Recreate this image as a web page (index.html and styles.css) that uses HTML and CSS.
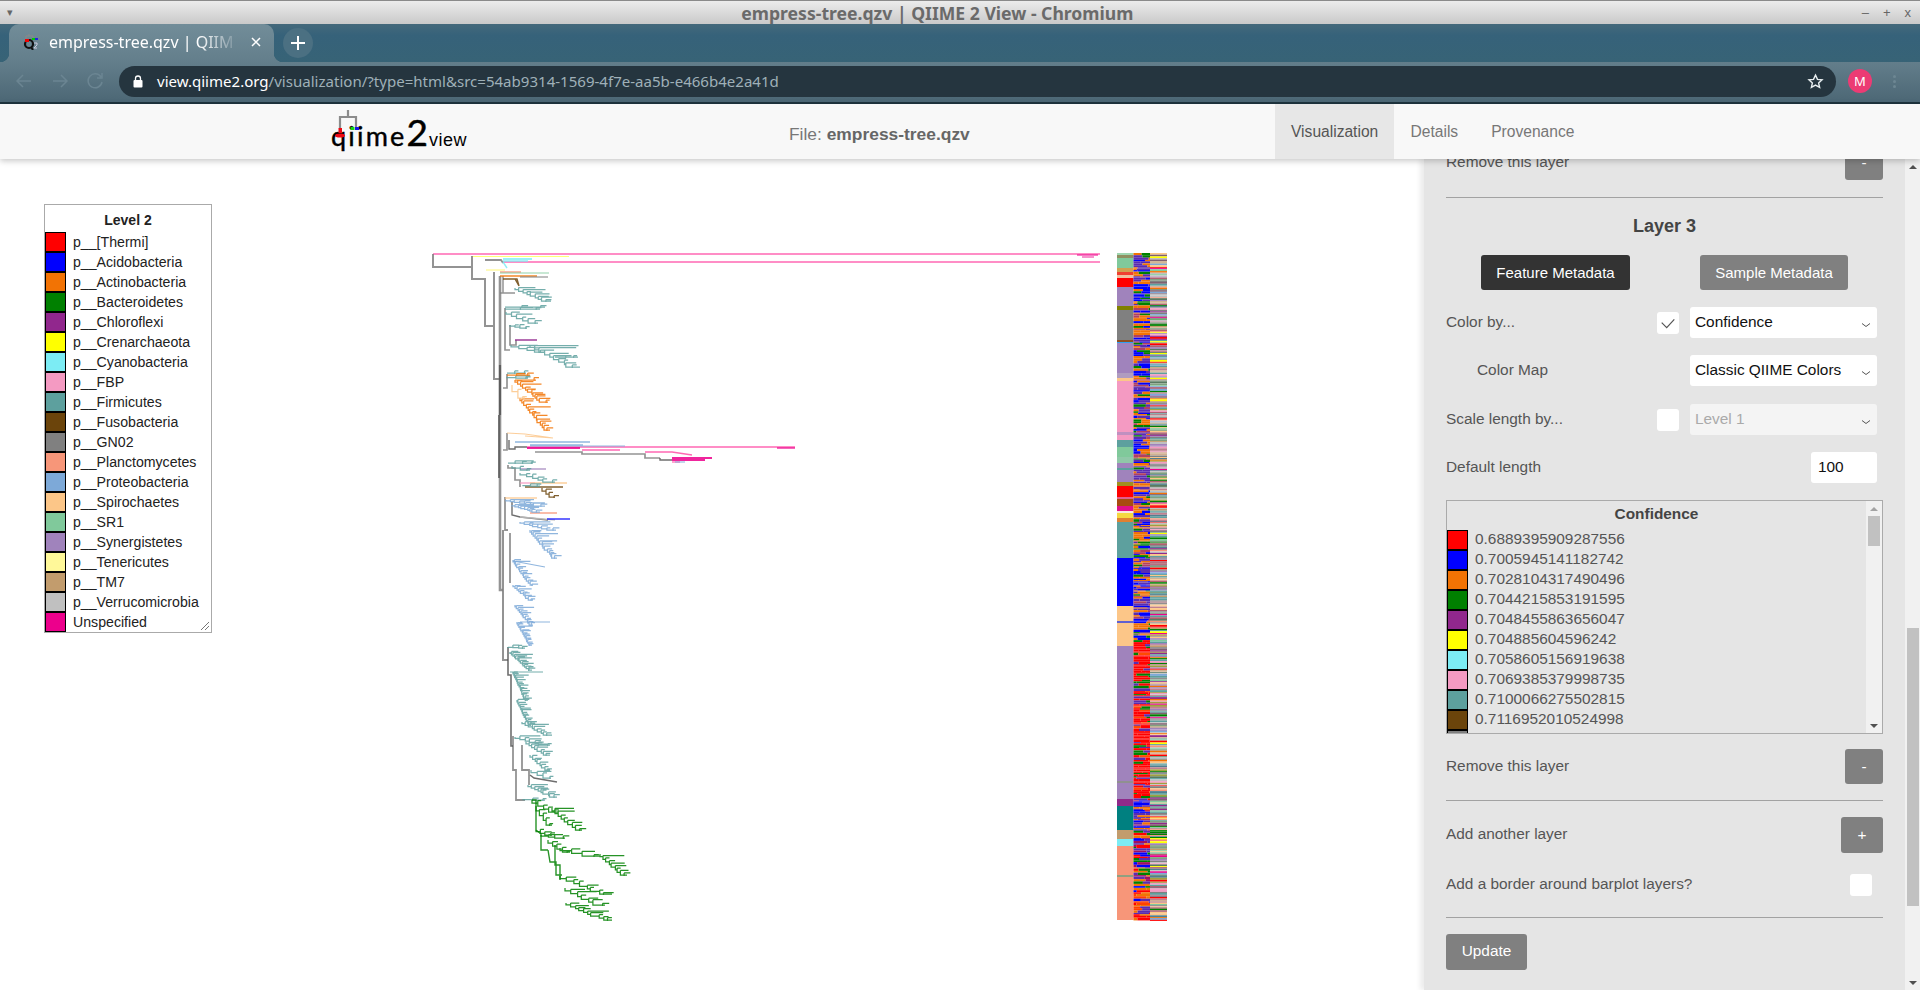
FILE: index.html
```html
<!DOCTYPE html>
<html lang="en">
<head>
    <meta charset="UTF-8">
    <title>empress-tree.qzv | QIIME 2 View - Chromium</title>
    <link rel="stylesheet" href="styles.css">
</head>
<body>
    <div class="titlebar">
        <span class="win-menu">▾</span>
        <span class="win-title">empress-tree.qzv | QIIME 2 View - Chromium</span>
        <span class="win-btns"><span>–</span><span>+</span><span>x</span></span>
    </div>
    <div class="tabstrip">
        <div class="tab">
            <svg class="favicon" width="16" height="16" viewBox="0 0 16 16">
                <circle cx="6" cy="10" r="4" fill="none" stroke="#111" stroke-width="2.200"/>
                <path d="M8 13l2 3" stroke="#111" stroke-width="2"/>
                <path d="M6 0v2M3 6V2h7v4" fill="none" stroke="#8a8a8a" stroke-width="1"/>
                <rect x="2" y="5" width="4" height="3" fill="#e00"/>
                <rect x="9" y="4" width="3" height="2" fill="#0c0"/>
                <rect x="12" y="4" width="3" height="2" fill="#22d"/>
                <path d="M11 9h3v2l-3 3h3" fill="none" stroke="#ccd" stroke-width="1"/>
            </svg>
            <span class="tab-title">empress-tree.qzv | QIIM</span>
            <svg class="tab-close" width="10" height="10" viewBox="0 0 10 10" stroke="#fff" stroke-width="1.500"><path d="M1 1l8 8M9 1l-8 8"/></svg>
        </div>
        <div class="newtab">
            <svg width="14" height="14" viewBox="0 0 14 14" stroke="#fff" stroke-width="2"><path d="M7 0v14M0 7h14"/></svg>
        </div>
    </div>
    <div class="toolbar">
        <svg class="nav-icons" width="90" height="20" viewBox="0 0 90 20" fill="none" stroke="#6b8592" stroke-width="1.500">
            <path d="M16 10H3M8 4l-6 6 6 6"/>
            <path d="M38 10h13M46 4l6 6-6 6"/>
            <path d="M86 6a7 7 0 1 0 1 5M87 2v5h-5"/>
        </svg>
        <div class="omnibox">
            <svg class="lock" width="10" height="13" viewBox="0 0 10 13">
                <rect x="0.500" y="5" width="9" height="7.500" rx="1" fill="#fff"/>
                <path d="M2.500 5V3.500a2.500 2.500 0 0 1 5 0V5" fill="none" stroke="#fff" stroke-width="1.300"/>
            </svg>
            <span class="url"><b>view.qiime2.org</b>/visualization/?type=html&amp;src=54ab9314-1569-4f7e-aa5b-e466b4e2a41d</span>
            <svg class="star" width="17" height="17" viewBox="0 0 24 24" fill="none" stroke="#e8eef0" stroke-width="2">
                <path d="M12 3l2.800 6 6.400.7-4.800 4.300 1.400 6.400-5.800-3.300-5.800 3.300 1.400-6.400-4.800-4.300 6.400-.7z"/>
            </svg>
        </div>
        <div class="avatar">M</div>
        <div class="dots"><i></i><i></i><i></i></div>
    </div>

    <nav class="navbar">
        <div class="logo">
            <span class="logo-qiime">qiime</span><span class="logo-two">2</span><span class="logo-view">view</span>
            <svg class="logo-tree" width="28" height="30" viewBox="0 0 28 30">
                <path d="M15 0v7M7 19V7h16v10" fill="none" stroke="#8c8c8c" stroke-width="2.200"/>
                <rect x="5.500" y="18" width="3.500" height="5" fill="#ee0a14"/>
                <ellipse cx="7" cy="25.500" rx="5" ry="2" fill="#ee0a14"/>
                <rect x="17.500" y="17" width="4" height="3" fill="#14d214"/>
                <rect x="22" y="17" width="4" height="3" fill="#1414e6"/>
            </svg>
        </div>
        <div class="file-name">File: <strong>empress-tree.qzv</strong></div>
        <ul class="nav-tabs">
            <li class="active">Visualization</li>
            <li>Details</li>
            <li>Provenance</li>
        </ul>
    </nav>

    <main class="main">
        <div class="canvas">
            <svg id="plot" class="plot" width="1424" height="831" viewBox="0 159 1424 831"></svg>
            <div class="legend legend-float">
                <div class="legend-title">Level 2</div>
                <div class="legend-row"><span class="swatch" style="background:#ff0000"></span>p__[Thermi]</div>
                <div class="legend-row"><span class="swatch" style="background:#0000ff"></span>p__Acidobacteria</div>
                <div class="legend-row"><span class="swatch" style="background:#f27304"></span>p__Actinobacteria</div>
                <div class="legend-row"><span class="swatch" style="background:#008000"></span>p__Bacteroidetes</div>
                <div class="legend-row"><span class="swatch" style="background:#91278d"></span>p__Chloroflexi</div>
                <div class="legend-row"><span class="swatch" style="background:#ffff00"></span>p__Crenarchaeota</div>
                <div class="legend-row"><span class="swatch" style="background:#7cecf4"></span>p__Cyanobacteria</div>
                <div class="legend-row"><span class="swatch" style="background:#f49ac2"></span>p__FBP</div>
                <div class="legend-row"><span class="swatch" style="background:#5da09e"></span>p__Firmicutes</div>
                <div class="legend-row"><span class="swatch" style="background:#6b440b"></span>p__Fusobacteria</div>
                <div class="legend-row"><span class="swatch" style="background:#808080"></span>p__GN02</div>
                <div class="legend-row"><span class="swatch" style="background:#f79679"></span>p__Planctomycetes</div>
                <div class="legend-row"><span class="swatch" style="background:#7da9d8"></span>p__Proteobacteria</div>
                <div class="legend-row"><span class="swatch" style="background:#fcc688"></span>p__Spirochaetes</div>
                <div class="legend-row"><span class="swatch" style="background:#80c99b"></span>p__SR1</div>
                <div class="legend-row"><span class="swatch" style="background:#a083bc"></span>p__Synergistetes</div>
                <div class="legend-row"><span class="swatch" style="background:#fff899"></span>p__Tenericutes</div>
                <div class="legend-row"><span class="swatch" style="background:#c29c6d"></span>p__TM7</div>
                <div class="legend-row"><span class="swatch" style="background:#c0c0c0"></span>p__Verrucomicrobia</div>
                <div class="legend-row"><span class="swatch" style="background:#ec008c"></span>Unspecified</div>
                <svg class="grip" width="10" height="10" viewBox="0 0 10 10" stroke="#777"><path d="M1 9l8-8M5 9l4-4"/></svg>
            </div>
        </div>

        <aside class="sidebar">
            <div class="side-body">
                <div class="row row-first">
                    <span class="label">Remove this layer</span>
                    <button class="btn btn-small">-</button>
                </div>
                <hr class="rule">
                <h3 class="layer-title">Layer 3</h3>
                <div class="tab-btns">
                    <button class="btn btn-dark btn-meta">Feature Metadata</button>
                    <button class="btn btn-meta">Sample Metadata</button>
                </div>
                <div class="row row-form">
                    <span class="label">Color by...</span>
                    <span class="check">
                        <svg width="22" height="22" viewBox="0 0 22 22" fill="none" stroke="#555" stroke-width="1.200"><path d="M4.700 10.700l5 5 7.600-8.400"/></svg>
                    </span>
                    <div class="select">Confidence<svg class="chev" width="10" height="6" viewBox="0 0 10 6" fill="none" stroke="#555"><path d="M1 1.500l4 3 4-3"/></svg></div>
                </div>
                <div class="row row-form">
                    <span class="label label-indent">Color Map</span>
                    <div class="select">Classic QIIME Colors<svg class="chev" width="10" height="6" viewBox="0 0 10 6" fill="none" stroke="#555"><path d="M1 1.500l4 3 4-3"/></svg></div>
                </div>
                <div class="row row-form row-scale">
                    <span class="label">Scale length by...</span>
                    <span class="check"></span>
                    <div class="select select-off">Level 1<svg class="chev" width="10" height="6" viewBox="0 0 10 6" fill="none" stroke="#555"><path d="M1 1.500l4 3 4-3"/></svg></div>
                </div>
                <div class="row row-form">
                    <span class="label">Default length</span>
                    <div class="num-input">100</div>
                </div>
                <div class="legend legend-inner">
                    <div class="legend-list">
                        <div class="legend-title">Confidence</div>
                        <div class="legend-row"><span class="swatch" style="background:#ff0000"></span>0.6889395909287556</div>
                        <div class="legend-row"><span class="swatch" style="background:#0000ff"></span>0.7005945141182742</div>
                        <div class="legend-row"><span class="swatch" style="background:#f27304"></span>0.7028104317490496</div>
                        <div class="legend-row"><span class="swatch" style="background:#008000"></span>0.7044215853191595</div>
                        <div class="legend-row"><span class="swatch" style="background:#91278d"></span>0.7048455863656047</div>
                        <div class="legend-row"><span class="swatch" style="background:#ffff00"></span>0.704885604596242</div>
                        <div class="legend-row"><span class="swatch" style="background:#7cecf4"></span>0.7058605156919638</div>
                        <div class="legend-row"><span class="swatch" style="background:#f49ac2"></span>0.7069385379998735</div>
                        <div class="legend-row"><span class="swatch" style="background:#5da09e"></span>0.7100066275502815</div>
                        <div class="legend-row"><span class="swatch" style="background:#6b440b"></span>0.7116952010524998</div>
                        <div class="legend-row"><span class="swatch" style="background:#808080"></span></div>
                    </div>
                    <div class="inner-scroll">
                        <span class="arrow-up arrow-light"></span>
                        <span class="inner-thumb"></span>
                        <span class="arrow-down"></span>
                    </div>
                </div>
                <div class="row row-remove">
                    <span class="label">Remove this layer</span>
                    <button class="btn btn-small">-</button>
                </div>
                <hr class="rule rule-mid">
                <div class="row row-add">
                    <span class="label">Add another layer</span>
                    <button class="btn btn-plus">+</button>
                </div>
                <div class="row row-border">
                    <span class="label">Add a border around barplot layers?</span>
                    <span class="check"></span>
                </div>
                <hr class="rule rule-low">
                <button class="btn btn-update">Update</button>
            </div>
            <div class="side-scroll">
                <span class="arrow-up"></span>
                <span class="side-thumb"></span>
                <span class="arrow-down"></span>
            </div>
        </aside>
    </main>
    <script src="app.js"></script>
</body>
</html>
```

FILE: styles.css
```css
* {
    box-sizing: border-box;
}

html, body {
    margin: 0;
    padding: 0;
    height: 990px;
    overflow: hidden;
}

body {
    display: flex;
    flex-direction: column;
    font-family: "Liberation Sans", Arial, sans-serif;
    background: #fff;
}

/* window + browser chrome */
.titlebar {
    height: 24px;
    display: flex;
    align-items: center;
    justify-content: space-between;
    padding: 0 7px;
    border-top: 1px solid #8a8a8a;
    background: linear-gradient(#ececec, #c9c9c9);
    color: #666;
}

.win-menu {
    font-size: 11px;
}

.win-title {
    flex: 1;
    text-align: center;
    font: bold 17.600px "Noto Sans", sans-serif;
    color: #6a6a6a;
    padding-left: 6px;
    padding-right: 6px;
}

.win-btns {
    display: flex;
    gap: 14px;
    font-size: 13px;
    padding-right: 2px;
}

.tabstrip {
    height: 38px;
    display: flex;
    align-items: flex-end;
    background: linear-gradient(#44697b, #36627a 30%, #376376);
    padding-left: 9px;
}

.tab {
    width: 265px;
    height: 38px;
    padding: 0 0 3px 14px;
    display: flex;
    align-items: center;
    position: relative;
    border-radius: 10px 10px 0 0;
    background: linear-gradient(#728d99, #637e8b);
    color: #fff;
}

/* flared bottom corners of the tab */
.tab::before,
.tab::after {
    content: "";
    position: absolute;
    bottom: 0;
    width: 9px;
    height: 9px;
}

.tab::before {
    left: -9px;
    background: radial-gradient(circle at 0 0, transparent 9px, #637e8b 9.500px);
}

.tab::after {
    right: -9px;
    background: radial-gradient(circle at 100% 0, transparent 9px, #637e8b 9.500px);
}

.favicon {
    flex: none;
}

.tab-title {
    flex: none;
    width: 192px;
    margin-left: 10px;
    white-space: nowrap;
    font: 16px "Noto Sans", sans-serif;
    -webkit-mask-image: linear-gradient(90deg, #000 78%, transparent 100%);
    mask-image: linear-gradient(90deg, #000 78%, transparent 100%);
}

.tab-close {
    flex: none;
    margin-left: 10px;
}

.newtab {
    width: 30px;
    height: 30px;
    margin: 0 0 4px 9px;
    display: flex;
    align-items: center;
    justify-content: center;
    border-radius: 50%;
    background: #4b7082;
}

.toolbar {
    height: 42px;
    display: flex;
    align-items: center;
    padding: 0 0 2px 15px;
    background: linear-gradient(#637e8b, #4d6876 95%);
    border-bottom: 2px solid #1e343e;
}

.nav-icons {
    flex: none;
}

.omnibox {
    width: 1717px;
    height: 31px;
    margin-left: 14px;
    display: flex;
    align-items: center;
    padding: 0 12px 0 14px;
    border-radius: 16px;
    background: #25353f;
}

.lock {
    flex: none;
}

.url {
    flex: 1;
    margin-left: 14px;
    font: 15.050px "Noto Sans", sans-serif;
    color: #9fb0b8;
    white-space: nowrap;
}

.url b {
    font-weight: normal;
    color: #fff;
}

.avatar {
    width: 24px;
    height: 24px;
    margin-left: 12px;
    border-radius: 50%;
    background: #ec3b74;
    color: #fff;
    text-align: center;
    font: 13px/24px "Noto Sans", sans-serif;
}

.dots {
    margin-left: 21px;
    display: flex;
    flex-direction: column;
    gap: 2px;
}

.dots i {
    width: 3px;
    height: 3px;
    border-radius: 50%;
    background: #6d8793;
}

/* qiime2 view navbar */
.navbar {
    height: 55px;
    display: flex;
    position: relative;
    z-index: 5;
    background: #f8f8f8;
    box-shadow: 0 2px 6px rgba(0, 0, 0, 0.22);
}

.logo {
    width: 789px;
    padding: 9px 0 0 331px;
    display: flex;
    align-items: baseline;
    position: relative;
    color: #000;
    line-height: 1;
}

.logo-tree {
    position: absolute;
    left: 333px;
    top: 6px;
}

.logo-qiime {
    font: 27px/1 "Lato", sans-serif;
    letter-spacing: 2.200px;
    -webkit-text-stroke: 0.400px #000;
}

.logo-two {
    font: 37px/1 "Lato", sans-serif;
    -webkit-text-stroke: 0.500px #000;
}

.logo-view {
    font: 18px/1 "Liberation Sans", sans-serif;
    letter-spacing: 0.500px;
    margin-left: 1px;
}

.file-name {
    width: 486px;
    padding-top: 20px;
    font-size: 17.400px;
    color: #777;
}

.file-name strong {
    color: #666;
}

.nav-tabs {
    display: flex;
    margin: 0;
    padding: 0;
    list-style: none;
    font-size: 15.600px;
    color: #777;
}

.nav-tabs li {
    padding: 19px 16.500px 0;
}

.nav-tabs li.active {
    width: 119px;
    padding-left: 16px;
    padding-right: 0;
    background: #e7e7e7;
    color: #555;
}

/* main area */
.main {
    flex: 1;
    display: flex;
    min-height: 0;
}

.canvas {
    flex: 1;
    position: relative;
}

.plot {
    display: block;
}

.plot .soft {
    filter: blur(0.450px);
}

.legend-float {
    position: absolute;
    left: 44px;
    top: 45px;
    width: 168px;
    height: 429px;
    border: 1px solid #aaa;
    background: #fff;
    font-size: 14.150px;
    color: #222;
}

.legend-title {
    height: 27px;
    padding-top: 7px;
    text-align: center;
    font-weight: bold;
    font-size: 14px;
}

.legend-row {
    height: 20px;
    display: flex;
    align-items: center;
    white-space: nowrap;
}

.swatch {
    flex: none;
    align-self: flex-start;
    width: 21px;
    height: 20px;
    margin-right: 7px;
    border: 1px solid #000;
}

.grip {
    position: absolute;
    right: 1px;
    bottom: 1px;
}

/* right panel */
.sidebar {
    width: 496px;
    flex: none;
    display: flex;
    box-shadow: -4px 0 5px rgba(0, 0, 0, 0.08);
}

.side-body {
    flex: 1;
    padding: 0 22px;
    background: #e5e5e5;
    color: #555;
    font-size: 15.400px;
}

.row {
    display: flex;
    align-items: center;
    justify-content: space-between;
}

.row-first {
    margin-top: -14px;
}

.label {
    flex: 1;
    padding-bottom: 2px;
}

.label-indent {
    padding-left: 31px;
}

.rule {
    margin: 17px 0 0;
    border: 0;
    border-top: 1px solid #a2a2a2;
    height: 1px;
}

.rule-mid {
    margin-top: 16px;
}

.rule-low {
    margin-top: 21px;
}

.layer-title {
    margin: 18px 0 0;
    height: 20px;
    text-align: center;
    font-size: 18px;
    line-height: 21px;
    color: #444;
}

.btn {
    display: block;
    padding: 0;
    border: 0;
    border-radius: 3px;
    background: #808080;
    color: #fff;
    font-family: inherit;
    font-size: 15.400px;
}

.btn-small {
    width: 38px;
    height: 35px;
}

.btn-plus {
    width: 42px;
    height: 36px;
}

.btn-meta {
    width: 148px;
    height: 35px;
    font-size: 15px;
}

.btn-dark {
    width: 149px;
    background: #333;
}

.btn-update {
    width: 81px;
    height: 36px;
    margin-top: 16px;
    padding-bottom: 2px;
}

.tab-btns {
    display: flex;
    justify-content: center;
    gap: 70px;
    margin-top: 19px;
}

.row-form {
    height: 31px;
    margin-top: 17px;
    padding-right: 6px;
}

.row-scale {
    margin-top: 18px;
}

.check {
    flex: none;
    width: 22px;
    height: 22px;
    margin-right: 11px;
    border-radius: 3px;
    background: #fff;
}

.select {
    flex: none;
    width: 187px;
    height: 31px;
    padding: 0 0 2px 5px;
    display: flex;
    align-items: center;
    position: relative;
    border-radius: 3px;
    background: #fff;
    color: #111;
}

.select-off {
    background: #f4f4f4;
    color: #aaa;
}

.chev {
    position: absolute;
    right: 6px;
    top: 15px;
}

.num-input {
    width: 66px;
    height: 31px;
    padding-left: 7px;
    border-radius: 3px;
    background: #fff;
    color: #111;
    line-height: 30px;
}

.legend-inner {
    display: flex;
    height: 234px;
    margin-top: 17px;
    border: 1px solid #aaa;
    font-size: 15.400px;
}

.legend-list {
    flex: 1;
    overflow: hidden;
}

.legend-inner .legend-title {
    height: 29px;
    padding-top: 4px;
    font-size: 15.400px;
    color: #444;
}

.legend-inner .legend-row {
    padding-bottom: 3px;
}

.inner-scroll {
    width: 16px;
    display: flex;
    flex-direction: column;
    align-items: center;
    background: #f1f1f1;
    padding: 6px 0 5px;
}

.inner-thumb {
    width: 12px;
    height: 30px;
    margin-top: 5px;
    background: #c1c1c1;
}

.inner-scroll .arrow-down {
    margin-top: auto;
}

.arrow-up,
.arrow-down {
    width: 0;
    height: 0;
    border-left: 4px solid transparent;
    border-right: 4px solid transparent;
}

.arrow-up {
    border-bottom: 4px solid #505050;
}

.arrow-down {
    border-top: 4px solid #505050;
}

.arrow-light {
    border-bottom-color: #a3a3a3;
}

.row-remove {
    margin-top: 15px;
}

.row-add {
    margin-top: 16px;
}

.row-border {
    height: 22px;
    margin-top: 21px;
}

.side-scroll {
    width: 15px;
    flex: none;
    display: flex;
    flex-direction: column;
    align-items: center;
    padding: 6px 0 5px;
    background: #f1f1f1;
}

.side-thumb {
    width: 12px;
    height: 278px;
    margin-top: 459px;
    background: #c1c1c1;
}

.side-scroll .arrow-down {
    margin-top: auto;
}
```

FILE: app.js
```js
// tree and barplots are drawn from a seeded generator so every load looks the same
var seed = 4711;
function rnd() {
    seed = (seed * 16807) % 2147483647;
    return (seed - 1) / 2147483646;
}

var C = {
    red: '#ff0000', blue: '#0000ff', orange: '#f27304', green: '#008000', purple: '#91278d',
    yellow: '#ffff00', cyan: '#7cecf4', pink: '#f49ac2', teal: '#5da09e', brown: '#6b440b',
    gray: '#808080', salmon: '#f79679', prot: '#7da9d8', peach: '#fcc688', sr1: '#80c99b',
    syn: '#a083bc', ten: '#fff899', tm7: '#c29c6d', verr: '#c0c0c0', hot: '#ec008c', hotl: '#ff4da6'
};

var paths = {};
function add(color, d, width) {
    var key = color + '|' + (width || 1.25);
    paths[key] = (paths[key] || '') + d;
}

// [x1, y1, x2, y2...] elbow line
function line(color, pts, width) {
    var d = 'M' + pts[0] + ' ' + pts[1];
    for (var i = 2; i < pts.length; i += 2) {
        d += 'L' + pts[i] + ' ' + pts[i + 1];
    }
    add(color, d, width);
}

// ladder shaped clade going from top-left to bottom-right, tips stay close to the spine
function clade(x0, y0, x1, y1, color, n) {
    var x = x0, y = y0;
    for (var i = 1; i <= n; i++) {
        var t = i / n;
        var nx = x0 + (x1 - x0) * t * (0.8 + rnd() * 0.15);
        var ny = y0 + (y1 - y0) * t;
        add(color, 'M' + x.toFixed(1) + ' ' + y.toFixed(1) + 'V' + ny.toFixed(1) + 'H' + nx.toFixed(1));
        var r = rnd();
        var tip = nx + 1.5 + r * r * Math.max(x1 - nx, 4) * 0.9 + 2;
        var up = ny - 1 - rnd() * 1.5;
        add(color, 'M' + nx.toFixed(1) + ' ' + up.toFixed(1) + 'V' + (ny + 1).toFixed(1) + 'M' + nx.toFixed(1) + ' ' + up.toFixed(1) + 'H' + tip.toFixed(1));
        x = nx;
        y = ny;
    }
    add(color, 'M' + x.toFixed(1) + ' ' + y.toFixed(1) + 'H' + x1);
}

// long tips and backbone
line(C.hotl, [433, 254, 1100, 254], 1.6);
line(C.hotl, [503, 262, 1100, 262], 1.6);
line(C.hot, [1077, 255, 1098, 255], 1.2);
line(C.hot, [1082, 257, 1094, 257], 1);
line('#ffff60', [472, 256.5, 569, 256.5], 1);
line(C.gray, [433, 254, 433, 267, 472, 267, 472, 279, 485, 279, 485, 326, 494, 326], 2);
line(C.gray, [485, 260, 501, 260, 503, 263], 1.8);
line(C.gray, [472, 256, 472, 267], 2);
line(C.gray, [494, 272, 494, 379, 500, 379], 2);
line(C.gray, [500, 276, 500, 590, 503, 590], 2.6);
line('#555555', [500, 365, 500, 415], 2.2);
line('#555555', [499, 415, 499, 478], 1.8);
line(C.gray, [503, 530, 503, 660, 508, 660], 2);
line('#555555', [508, 647, 508, 675, 511, 675, 511, 746, 513, 746], 1.6);
line(C.gray, [513, 736, 513, 770, 516, 770, 516, 800, 525, 800], 1.8);
line(C.gray, [503, 290, 503, 293, 500, 293], 1.5);
line(C.gray, [503, 276, 503, 293, 515, 293], 1.5);
line(C.gray, [505, 308, 505, 350, 510, 350], 1.7);
line(C.gray, [510, 325, 510, 345, 516, 345, 516, 340], 1.7);
line(C.gray, [507, 374, 507, 388, 503, 388], 1.7);
line(C.gray, [507, 433, 507, 450, 503, 450], 1.7);
line('#555555', [509, 440, 509, 449, 515, 449, 515, 447, 527, 447], 1.4);
line(C.gray, [508, 465, 508, 468, 515, 468, 515, 480, 520, 480, 520, 487], 1.7);
line(C.gray, [505, 497, 505, 530, 508, 530], 1.8);
line('#555555', [512, 502, 512, 515, 520, 517, 548, 520], 1.4);
line(C.gray, [510, 533, 510, 583], 1.8);
line(C.gray, [522, 745, 522, 770, 529, 770, 529, 785], 1.8);
line('#555555', [530, 775, 534, 778, 557, 782], 1.5);

line(C.hotl, [527, 447, 795, 447], 1.6);
line(C.hot, [527, 448, 580, 448], 2);
line(C.hot, [777, 448, 795, 448], 1.4);
line(C.prot, [530, 446, 625, 446], 1);
line(C.gray, [535, 452, 582, 452, 582, 454, 645, 454, 645, 458, 660, 458], 1.7);
line(C.hotl, [582, 450, 620, 450], 1.6);
line('#555555', [660, 458, 660, 460, 672, 460], 1.4);
line(C.hotl, [645, 452, 672, 452, 692, 455], 1.4);
line(C.hot, [672, 458, 712, 458], 1.8);
line(C.hot, [672, 460, 705, 460], 1.8);
line(C.hotl, [672, 462, 680, 462], 1.2);
line(C.prot, [675, 462, 685, 462], 1.1);
line(C.prot, [515, 442, 590, 442], 1.6);
line(C.prot, [530, 445, 583, 445], 1.4);
line(C.peach, [507, 433, 525, 434, 553, 438], 1.2);
line(C.peach, [525, 436, 553, 438], 1.2);

line(C.cyan, [503, 259, 532, 259], 1.8);
line(C.cyan, [503, 261, 528, 261], 1.4);
line(C.cyan, [503, 262, 507, 268], 1.4);
line(C.ten, [486, 270, 505, 270], 1.6);
line(C.salmon, [500, 272, 521, 272], 1.6);
line(C.sr1, [500, 273, 549, 273], 1.2);
line(C.orange, [500, 276, 537, 276], 1.4);
line(C.gray, [520, 277, 548, 277], 1.2);
line(C.brown, [503, 279, 517, 279, 519, 286], 1.4);
line(C.brown, [515, 279, 519, 286], 1.4);
line(C.purple, [515, 340, 537, 340], 1.6);
line(C.syn, [520, 469, 546, 469], 1.4);
line(C.pink, [520, 483, 535, 483], 1.4);
line(C.peach, [530, 483, 567, 483], 1.6);
line(C.brown, [525, 487, 563, 487], 1.4);
line(C.peach, [505, 498, 537, 498], 1.4);
line(C.salmon, [530, 513, 557, 513], 1.6);
line(C.verr, [520, 517, 555, 520], 1.4);
line(C.blue, [547, 519, 570, 519], 1.4);
line(C.prot, [513, 561, 545, 567], 1.2);
line(C.prot, [520, 622, 550, 622], 1.2);
line(C.teal, [510, 672, 543, 672], 1.2);

var clades = [
    [515, 288, 551, 301, C.teal, 8],
    [505, 307, 545, 307, C.teal, 2],
    [505, 309, 540, 309, C.teal, 2],
    [506, 312, 538, 323, C.teal, 5],
    [510, 325, 527, 328, C.teal, 3],
    [511, 345, 545, 352, C.teal, 4],
    [530, 345, 580, 367, C.teal, 9],
    [555, 357, 578, 357, C.teal, 2],
    [507, 373, 526, 373, C.teal, 2],
    [507, 375, 530, 375, C.orange, 2],
    [507, 377, 528, 378, C.teal, 2],
    [515, 380, 536, 380, C.orange, 1],
    [515, 380, 548, 402, C.orange, 11],
    [520, 398, 550, 430, C.orange, 13],
    [512, 385, 525, 398, C.peach, 2],
    [508, 463, 533, 463, C.teal, 3],
    [512, 466, 530, 470, C.teal, 2],
    [520, 473, 555, 482, C.teal, 5],
    [523, 485, 540, 486, C.teal, 2],
    [542, 488, 555, 497, C.brown, 3],
    [506, 500, 545, 506, C.prot, 8],
    [512, 505, 540, 512, C.prot, 8],
    [520, 522, 556, 530, C.prot, 7],
    [530, 530, 557, 558, C.prot, 14],
    [513, 560, 533, 585, C.prot, 13],
    [513, 585, 533, 600, C.prot, 9],
    [515, 605, 533, 625, C.prot, 11],
    [517, 622, 532, 645, C.prot, 13],
    [508, 647, 525, 648, C.teal, 3],
    [510, 652, 532, 670, C.teal, 13],
    [513, 672, 528, 700, C.teal, 15],
    [517, 700, 531, 725, C.teal, 13],
    [522, 722, 552, 735, C.teal, 8],
    [515, 737, 550, 745, C.teal, 6],
    [526, 742, 550, 755, C.teal, 7],
    [530, 755, 550, 770, C.teal, 7],
    [531, 770, 551, 778, C.teal, 3],
    [528, 785, 557, 797, C.teal, 8],
    [523, 799, 545, 800, C.teal, 2],
    [532, 800, 558, 812, C.green, 4],
    [536, 806, 552, 825, C.green, 4],
    [552, 808, 582, 830, C.green, 8],
    [536, 830, 552, 835, C.green, 3],
    [541, 835, 565, 838, C.green, 3],
    [548, 840, 570, 852, C.green, 4],
    [560, 848, 600, 856, C.green, 3],
    [600, 854, 627, 875, C.green, 8],
    [560, 876, 612, 894, C.green, 7],
    [565, 888, 605, 905, C.green, 6],
    [566, 903, 612, 920, C.green, 9]
];
clades.forEach(function (c) {
    clade(c[0], c[1], c[2], c[3], c[4], c[5]);
});
line(C.green, [555, 845, 555, 865, 560, 865, 560, 880], 1.4);
line(C.green, [532, 800, 536, 800, 536, 830, 541, 834, 541, 850, 548, 850], 1.4);
line(C.green, [548, 850, 550, 862, 556, 862, 556, 875, 562, 875], 1.4);

var svg = '<g class="soft" fill="none">';
Object.keys(paths).forEach(function (key) {
    var p = key.split('|');
    svg += '<path d="' + paths[key] + '" stroke="' + p[0] + '" stroke-width="' + p[1] + '" opacity="0.85"/>';
});
svg += '</g><g class="soft">';

// first barplot column: [top, bottom, colour]
var col1 = [
    [253, 255, '#9fd6b0'], [255, 258, '#8f8f60'], [258, 268, C.sr1], [268, 272, '#d0a050'],
    [272, 275, '#f04030'], [275, 278, '#f0c0a0'], [278, 287, C.red], [287, 306, C.syn],
    [306, 310, '#808000'], [310, 340, C.gray], [340, 342, '#8f5020'], [342, 343, '#30a0f0'],
    [343, 373, C.syn], [373, 378, '#b09cc0'], [378, 381, C.peach], [381, 432, C.pink],
    [432, 435, '#c090c0'], [435, 440, C.pink], [440, 447, C.teal], [447, 457, C.sr1],
    [457, 463, '#90c8a8'], [463, 468, C.syn], [468, 470, C.teal], [470, 482, C.syn],
    [482, 486, '#a09020'], [486, 497, C.red], [497, 499, '#e06090'], [499, 506, '#a84c10'],
    [506, 511, '#e0108a'], [511, 513, '#f8e8e0'], [513, 518, '#f5d840'], [518, 522, '#e08030'],
    [522, 558, C.teal], [558, 606, C.blue], [606, 621, C.peach], [621, 623, '#6060d0'],
    [623, 646, C.peach], [646, 781, C.syn], [781, 783, '#909090'], [783, 799, C.syn],
    [799, 806, '#8f2a8a'], [806, 830, '#008080'], [830, 839, C.tm7], [839, 846, C.cyan],
    [846, 875, C.salmon], [875, 877, '#90a080'], [877, 920, C.salmon]
];
col1.forEach(function (s) {
    svg += '<rect x="1117" y="' + s[0] + '" width="16.5" height="' + (s[1] - s[0]) + '" fill="' + s[2] + '"/>';
});

// second column is a stack of two taxa per row, mix changes down the plot
var V = '#5a2cb0';
function mixAt(y) {
    if (y < 640) return [C.blue, C.blue, C.orange, C.orange, C.orange, V, V, '#b04060', C.green];
    if (y < 800) return [C.red, C.red, C.red, C.red, C.red, C.red, '#ff4a00', V, C.green];
    if (y < 830) return [V, C.orange, '#d03040', C.blue];
    if (y < 890) return [C.blue, V, C.orange, C.green, C.red, '#a01060'];
    return [C.red, C.red, C.orange, '#ff4000', V, C.blue];
}
function pick(a) {
    return a[Math.floor(rnd() * a.length)];
}
var y = 253;
var h, split;
while (y < 920) {
    h = 0.9 + rnd() * 1.8;
    split = 1136 + rnd() * 14;
    var mix = mixAt(y);
    svg += '<rect x="1133.5" y="' + y.toFixed(1) + '" width="' + (split - 1133.5).toFixed(1) + '" height="' + h.toFixed(1) + '" fill="' + pick(mix) + '"/>';
    svg += '<rect x="' + split.toFixed(1) + '" y="' + y.toFixed(1) + '" width="' + (1150 - split).toFixed(1) + '" height="' + h.toFixed(1) + '" fill="' + pick(mix) + '"/>';
    y += h;
}

// third column: thin rows, muted tones with the odd bright stripe
var pal = [C.red, C.prot, C.orange, C.green, C.purple, C.yellow, C.teal, C.teal, C.salmon, C.peach, C.sr1, C.syn, C.tm7,
    C.pink, C.gray, C.verr, C.hot, '#c08090', '#80a080', '#a0a040', '#508090', '#b06070', '#909090', '#d0b090', '#806070', '#5a7a60'];
y = 253;
while (y < 920) {
    h = 0.8 + rnd() * 1.2;
    svg += '<rect x="1150" y="' + y.toFixed(1) + '" width="17" height="' + h.toFixed(1) + '" fill="' + pick(pal) + '"/>';
    y += h;
}
svg += '</g>';

document.getElementById('plot').innerHTML = svg;
```
